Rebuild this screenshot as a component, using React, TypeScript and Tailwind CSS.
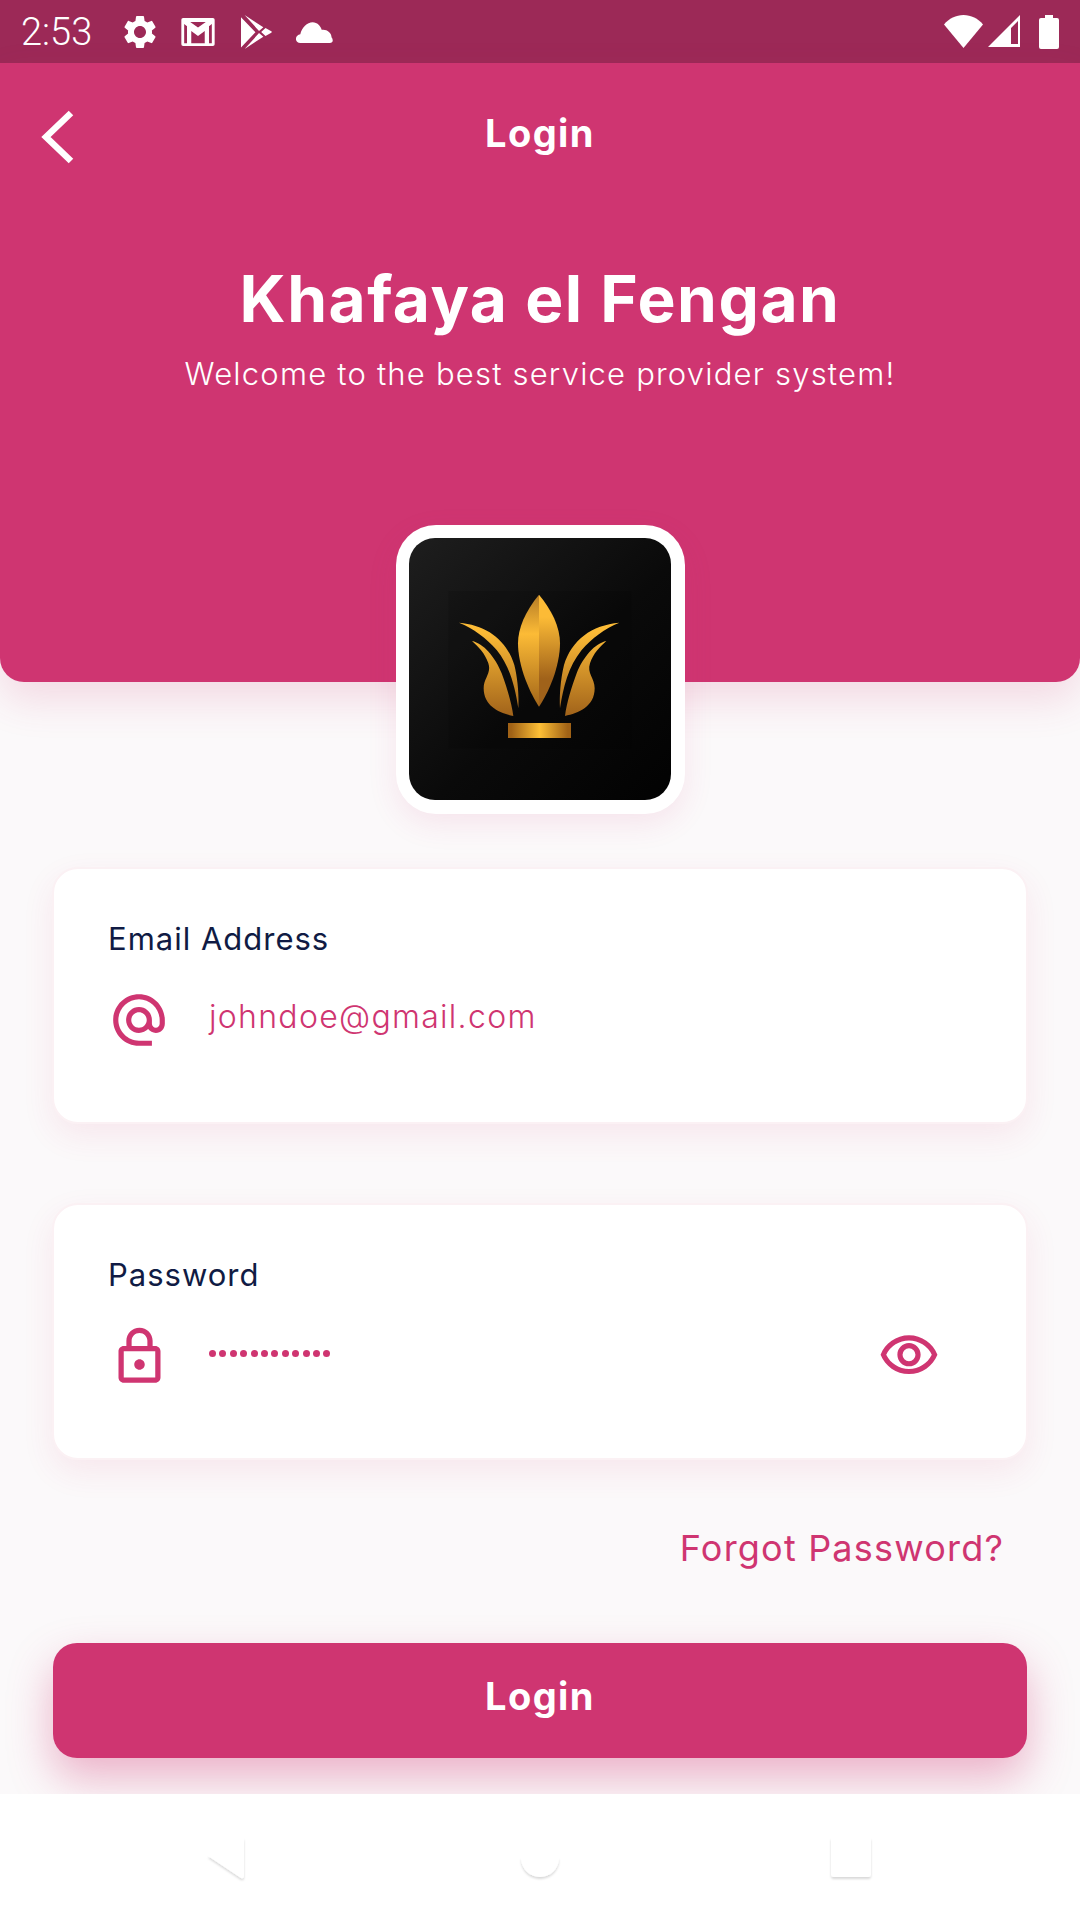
import { MdSettings, MdAlternateEmail, MdOutlineLock, MdOutlineVisibility } from "react-icons/md";

function StatusIcons() {
  return (
    <div className="flex items-center">
      <span className="ml-[21px] w-[80px] font-['Roboto',sans-serif] text-[38px] font-light leading-none text-white">2:53</span>
      <MdSettings size={40} className="ml-[19px] text-white" />
      <svg width="34" height="28" viewBox="528 55 94 79" className="ml-[21px]">
        <path fillRule="evenodd" fill="#fff" d="M533 55h84a5 5 0 0 1 5 5v69a5 5 0 0 1-5 5h-84a5 5 0 0 1-5-5V60a5 5 0 0 1 5-5zM553 66l22 16 22-16zM536 72v54h8V78zM614 72l-8 6v48h8zM556 126h38V92l-19 14-19-14z" />
      </svg>
      <svg width="31" height="34" viewBox="702 48 86 94" className="ml-[26px]">
        <path fill="#fff" d="M702 54L742 96L702 138zM712 48L764 82L752 92zM712 142L764 108L752 98zM770 84L786 93Q789 95 786 97L770 106L758 95z" />
      </svg>
      <svg width="37" height="22" viewBox="860 60 104 62" className="ml-[24px]">
        <path fill="#fff" d="M872 122C856 122 855 100 872 97C878 72 905 52 925 72C930 78 932 82 932 85C945 82 960 92 960 106C966 114 964 122 955 122z" />
      </svg>
    </div>
  );
}

function StatusRight() {
  return (
    <div className="flex items-center">
      <svg width="39" height="33" viewBox="0 0 39 33">
        <path fill="#fff" d="M0 9.500C5 3.500 12 0 19.500 0S34 3.500 39 9.500L19.500 33z" />
      </svg>
      <svg width="33" height="33" viewBox="0 0 33 33" className="ml-[5px]">
        <path fillRule="evenodd" fill="#fff" d="M32 0v32H0zM30 6l-7 7v16h7z" />
      </svg>
      <svg width="20" height="34" viewBox="0 0 20 34" className="ml-[18px]">
        <path fill="#fff" d="M6 0h8v3h4a2 2 0 0 1 2 2v27a2 2 0 0 1-2 2H2a2 2 0 0 1-2-2V5a2 2 0 0 1 2-2h4z" />
      </svg>
    </div>
  );
}

function Logo() {
  return (
    <svg viewBox="87 84 786 786" className="block h-full w-full">
      <defs>
        <linearGradient id="bg" x1="0" y1="0" x2="1" y2="1">
          <stop offset="0" stopColor="#1e1e1e" />
          <stop offset="0.55" stopColor="#0a0a0a" />
          <stop offset="1" stopColor="#020202" />
        </linearGradient>
        <linearGradient id="leafL" x1="0" y1="254" x2="0" y2="590" gradientUnits="userSpaceOnUse">
          <stop offset="0" stopColor="#b57c26" />
          <stop offset="0.35" stopColor="#fcbb36" />
          <stop offset="1" stopColor="#a36619" />
        </linearGradient>
        <linearGradient id="leafR" x1="0" y1="254" x2="0" y2="590" gradientUnits="userSpaceOnUse">
          <stop offset="0.2" stopColor="#fcbb36" />
          <stop offset="0.75" stopColor="#a0621a" />
        </linearGradient>
        <linearGradient id="gold" x1="0" y1="340" x2="0" y2="620" gradientUnits="userSpaceOnUse">
          <stop offset="0.1" stopColor="#fcbb36" />
          <stop offset="1" stopColor="#a0621a" />
        </linearGradient>
        <linearGradient id="base" x1="384" y1="0" x2="573" y2="0" gradientUnits="userSpaceOnUse">
          <stop offset="0.05" stopColor="#a06216" />
          <stop offset="0.5" stopColor="#fdbf36" />
          <stop offset="0.95" stopColor="#a06216" />
        </linearGradient>
      </defs>
      <rect x="87" y="84" width="786" height="786" fill="url(#bg)" />
      <rect x="205" y="243" width="550" height="472" fill="#000" opacity="0.1" />
      <path fill="url(#leafL)" d="M477 254C435 305 414 355 414 400C414 470 450 550 477 590z" />
      <path fill="url(#leafR)" d="M477 254C515 300 540 350 540 400C540 470 505 550 477 590z" />
      <g>
        <path fill="url(#gold)" d="M237 338C320 345 380 390 403 465C414 510 417 560 415 595C405 530 390 470 350 420C320 385 280 355 237 338z" />
        <path fill="url(#gold)" d="M276 393C310 400 345 440 365 490C380 530 395 580 400 618C360 610 311 590 311 535C311 505 335 490 325 460C315 430 295 410 276 393z" />
      </g>
      <g transform="translate(955 0) scale(-1 1)">
        <path fill="url(#gold)" d="M237 338C320 345 380 390 403 465C414 510 417 560 415 595C405 530 390 470 350 420C320 385 280 355 237 338z" />
        <path fill="url(#gold)" d="M276 393C310 400 345 440 365 490C380 530 395 580 400 618C360 610 311 590 311 535C311 505 335 490 325 460C315 430 295 410 276 393z" />
      </g>
      <rect x="384" y="639" width="189" height="45" fill="url(#base)" />
    </svg>
  );
}

function FieldCard({ label, icon, children }: any) {
  return (
    <div className="mx-[52px] h-[257px] rounded-[26px] border-2 border-[#fbf1f4] bg-white pl-[54px] pr-[60px] pt-[50px] shadow-[0_12px_32px_rgba(207,53,113,0.09)]">
      <div className="text-[31px] leading-[40px] tracking-[1px] text-[#101b44]">{label}</div>
      <div className="mt-[29px] flex h-[64px] items-center">
        <div className="flex w-[101px] shrink-0">{icon}</div>
        {children}
      </div>
    </div>
  );
}

export default function App() {
  return (
    <div className="relative flex h-[1920px] w-[1080px] flex-col overflow-hidden bg-[#fbf9fa] font-['Inter',sans-serif]">
      <div className="flex h-[63px] shrink-0 items-center justify-between bg-[#9c2957] pr-[21px]">
        <StatusIcons />
        <StatusRight />
      </div>

      <div className="relative h-[619px] shrink-0 rounded-b-[24px] bg-[#cf3571] text-white shadow-[0_18px_40px_rgba(207,53,113,0.16)]">
        <div className="absolute left-[40px] top-[47px]">
          <svg width="36" height="54" viewBox="0 0 36 54">
            <path d="M31 3L6 27l25 24" fill="none" stroke="#fff" strokeWidth="6.500" />
          </svg>
        </div>
        <div className="pt-[46px] text-center text-[38px] font-bold leading-[48px] tracking-[1.4px]">Login</div>
        <div className="mt-[102px] text-center text-[64px] font-bold leading-[80px] tracking-[1.5px]">Khafaya el Fengan</div>
        <div className="mt-[13px] text-center text-[31px] font-light leading-[44px] tracking-[1.2px]">Welcome to the best service provider system!</div>
      </div>

      <div className="relative mx-auto mt-[-157px] h-[289px] w-[289px] shrink-0 rounded-[40px] bg-white p-[13px] shadow-[0_10px_30px_rgba(207,53,113,0.1)]">
        <div className="h-[262px] w-[262px] overflow-hidden rounded-[26px]">
          <Logo />
        </div>
      </div>

      <div className="mt-[53px]">
        <FieldCard label="Email Address" icon={<MdAlternateEmail size={62} className="text-[#cf3571]" />}>
          <span className="mt-[-6px] text-[32px] font-light leading-none tracking-[1.3px] text-[#cf3571]">johndoe@gmail.com</span>
        </FieldCard>
      </div>

      <div className="mt-[79px]">
        <FieldCard label="Password" icon={<MdOutlineLock size={63} className="text-[#cf3571]" />}>
          <div className="mt-[-5px] flex gap-[3.400px]">
            {Array.from({ length: 12 }).map((_, i) => (
              <span key={i} className="h-[7px] w-[7px] rounded-full bg-[#cf3571]" />
            ))}
          </div>
          <MdOutlineVisibility size={62} className="ml-auto mr-[26px] text-[#cf3571]" />
        </FieldCard>
      </div>

      <div className="mt-[62px] pr-[76px] text-right text-[36px] leading-[52px] tracking-[1.2px] text-[#cf3571]">Forgot Password?</div>

      <button className="mx-[53px] mt-[69px] h-[115px] shrink-0 rounded-[24px] bg-[#cf3571] pb-[8px] text-[38px] font-bold tracking-[1.4px] text-white shadow-[0_20px_44px_rgba(207,53,113,0.36)]">
        Login
      </button>

      <div className="absolute inset-x-0 bottom-0 flex h-[126px] items-start bg-white">
        <svg width="1080" height="126" viewBox="0 0 1080 126">
          <defs>
            <filter id="sh" x="-30%" y="-30%" width="160%" height="160%">
              <feDropShadow dx="0" dy="2" stdDeviation="1.200" floodColor="#000" floodOpacity="0.15" />
            </filter>
          </defs>
          <g fill="#fff" filter="url(#sh)">
            <path d="M208 62L241 84q3 1 3-2V44z" />
            <path d="M521 64a19 19 0 0 0 38 0z" />
            <path d="M831 44h40v36a3 3 0 0 1-3 3h-34a3 3 0 0 1-3-3z" />
          </g>
        </svg>
      </div>
    </div>
  );
}
